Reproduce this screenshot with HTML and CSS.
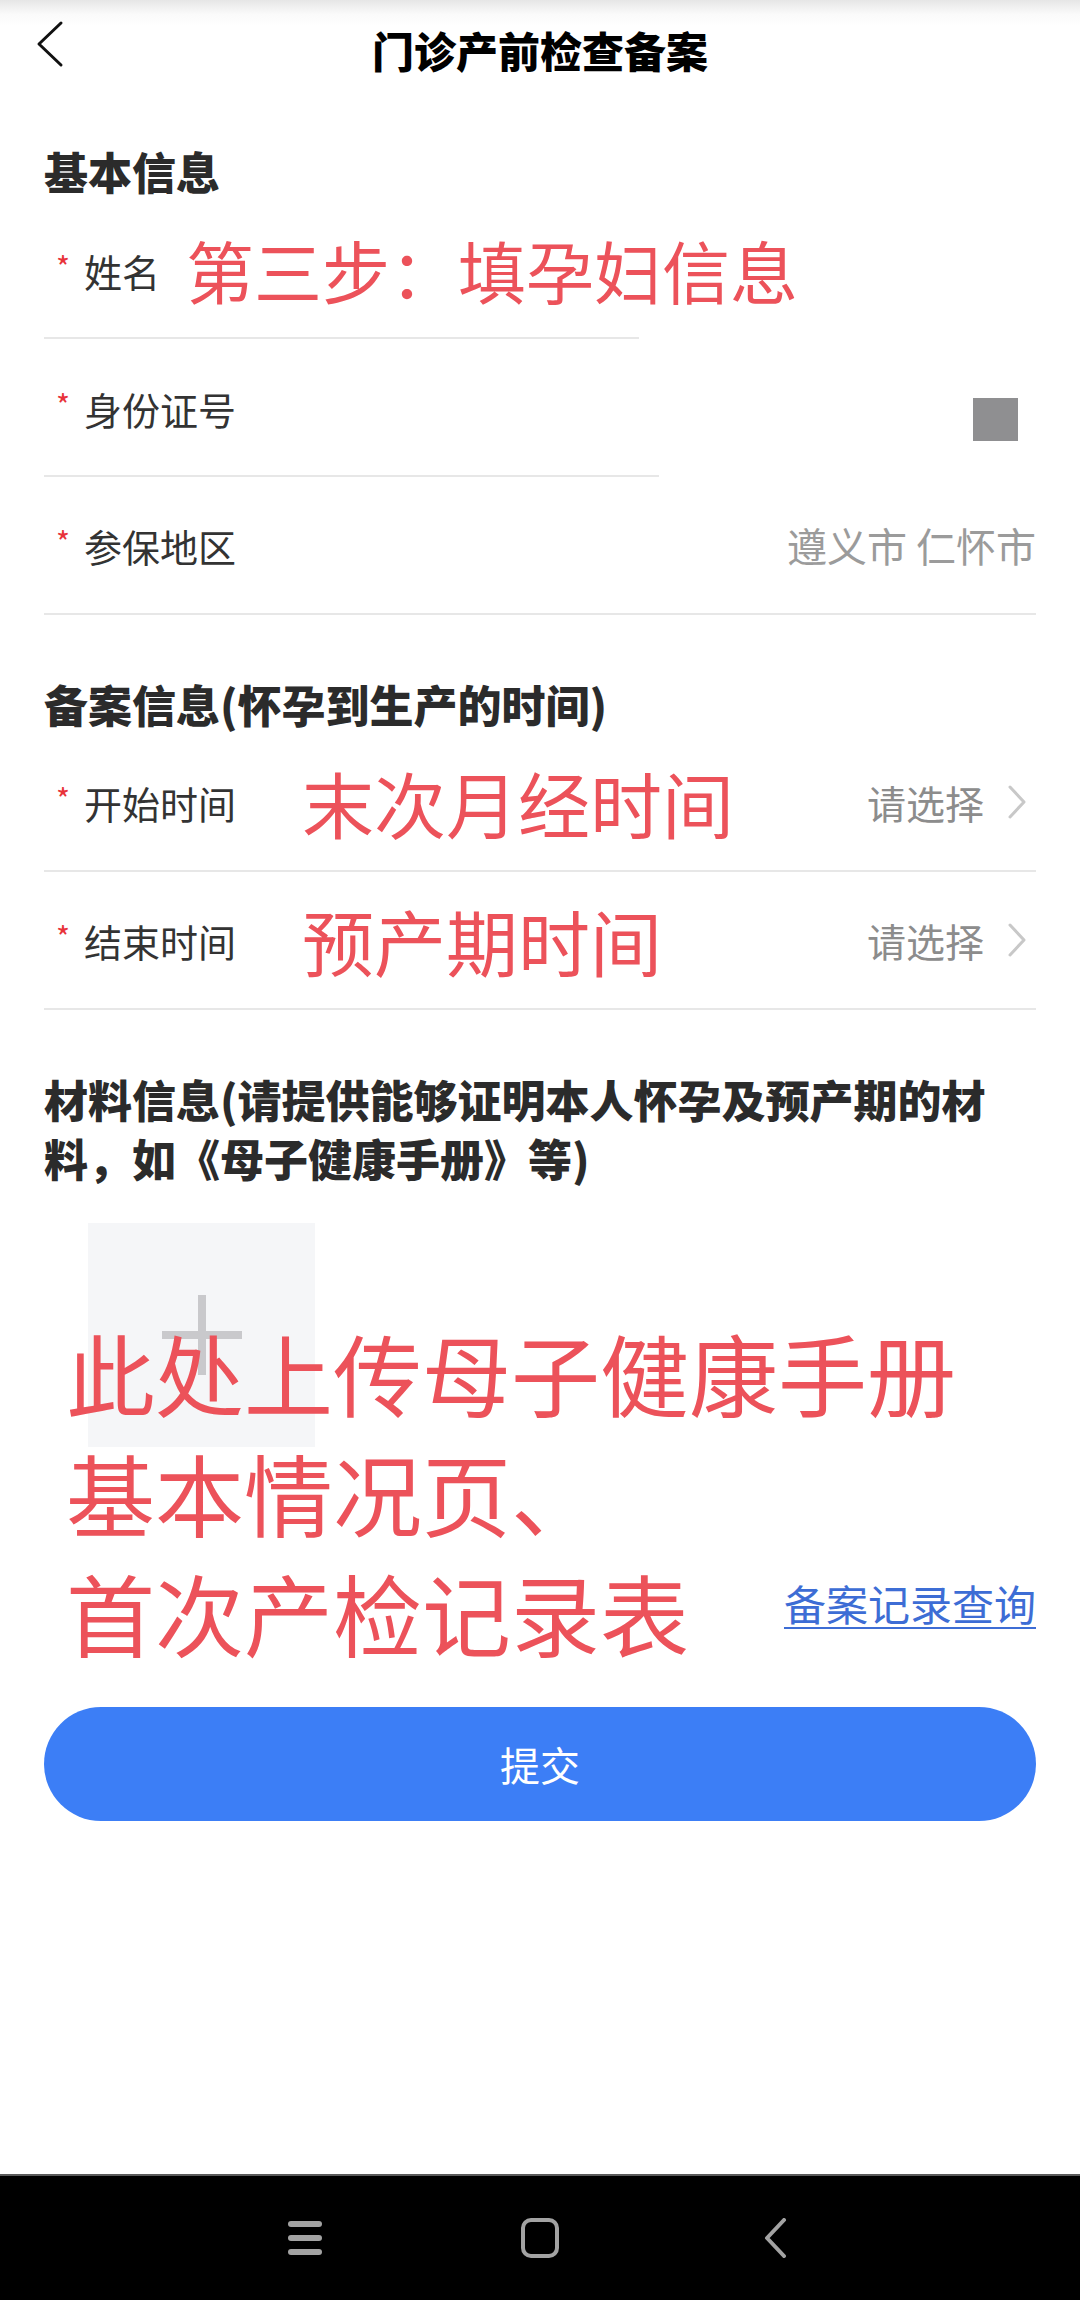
FILE: index.html
```html
<!DOCTYPE html>
<html lang="zh-CN">
<head>
  <meta charset="UTF-8" />
  <meta name="viewport" content="width=device-width, initial-scale=1" />
  <title>门诊产前检查备案</title>
  <link rel="stylesheet" href="styles.css">
</head>
<body>
  <header class="navbar">
    <button class="back-btn" aria-label="返回">
      <svg width="28" height="48" viewBox="0 0 28 48"><path d="M25 3 L3 24 L25 45" fill="none" stroke="#111" stroke-width="3" stroke-linecap="round" stroke-linejoin="round"/></svg>
    </button>
    <h1>门诊产前检查备案</h1>
    <span></span>
  </header>

  <main class="form">
    <h2 class="section-title first">基本信息</h2>
    <div class="row cut-short">
      <span class="label"><i class="req">*</i>姓名</span>
      <span class="note note-name">第三步：填孕妇信息</span>
    </div>
    <div class="row cut-long">
      <span class="label"><i class="req">*</i>身份证号</span>
      <span class="id-mask"></span>
    </div>
    <div class="row">
      <span class="label"><i class="req">*</i>参保地区</span>
      <span class="value">遵义市 仁怀市</span>
    </div>

    <h2 class="section-title">备案信息(怀孕到生产的时间)</h2>
    <div class="row">
      <span class="label"><i class="req">*</i>开始时间</span>
      <span class="note note-date">末次月经时间</span>
      <span class="picker">请选择
        <svg width="22" height="36" viewBox="0 0 22 36"><path d="M4 3 L18 18 L4 33" fill="none" stroke="#c8c8c8" stroke-width="3" stroke-linecap="round" stroke-linejoin="round"/></svg>
      </span>
    </div>
    <div class="row">
      <span class="label"><i class="req">*</i>结束时间</span>
      <span class="note note-date">预产期时间</span>
      <span class="picker">请选择
        <svg width="22" height="36" viewBox="0 0 22 36"><path d="M4 3 L18 18 L4 33" fill="none" stroke="#c8c8c8" stroke-width="3" stroke-linecap="round" stroke-linejoin="round"/></svg>
      </span>
    </div>

    <h2 class="section-title">材料信息(请提供能够证明本人怀孕及预产期的材<br>料，如《母子健康手册》等)</h2>
    <div class="upload">
      <div class="upload-box"><span class="plus"></span></div>
      <!-- annotation laid over the upload area -->
      <p class="upload-note">此处上传母子健康手册<br>基本情况页、<br>首次产检记录表</p>
    </div>

    <div class="link-row">
      <a href="#" class="record-link">备案记录查询</a>
    </div>

    <button class="submit-btn">提交</button>
  </main>

  <footer class="sysbar">
    <span class="sys-icon">
      <svg width="34" height="34" viewBox="0 0 34 34"><rect x="0" y="0" width="34" height="6" rx="3" fill="#a3a3a3"/><rect x="0" y="14" width="34" height="6" rx="3" fill="#a3a3a3"/><rect x="0" y="28" width="34" height="6" rx="3" fill="#a3a3a3"/></svg>
    </span>
    <span class="sys-icon">
      <svg width="40" height="40" viewBox="0 0 40 40"><rect x="3" y="2" width="34" height="36" rx="8" fill="none" stroke="#a3a3a3" stroke-width="4"/></svg>
    </span>
    <span class="sys-icon">
      <svg width="24" height="40" viewBox="0 0 24 40"><path d="M21 2 L4 20 L21 38" fill="none" stroke="#a3a3a3" stroke-width="4" stroke-linecap="round" stroke-linejoin="round"/></svg>
    </span>
  </footer>
</body>
</html>
```

FILE: styles.css
```css
body {
  font-family: "Noto Sans CJK SC", "Noto Sans", sans-serif;
  margin: 0;
  padding: 0;
  min-height: 100vh;
  display: flex;
  flex-direction: column;
  background-color: #fff;
  color: #333;
}

/* Top bar */
.navbar {
  height: 100px;
  display: grid;
  grid-template-columns: 1fr auto 1fr;
  align-items: center;
  background: linear-gradient(#e6e6e6 0, #fafafa 14px, #fff 26px);
}
.back-btn {
  justify-self: start;
  align-self: start;
  margin: 20px 0 0 36px;
  padding: 0;
  border: none;
  background: transparent;
  line-height: 0;
}
.navbar h1 {
  margin: 0;
  font-size: 42px;
  font-weight: 900;
  color: #000;
  line-height: 60px;
}

/* Form */
.form {
  padding: 0 44px;
  display: flex;
  flex-direction: column;
}
.section-title {
  margin: 60px 0 0;
  font-size: 44px;
  font-weight: 900;
  line-height: 59px;
  color: #2b2b2b;
}
.section-title.first {
  margin-top: 42px;
}
.row {
  height: 138px;
  box-sizing: border-box;
  display: flex;
  align-items: center;
  border-bottom: 2px solid #e7e7e7;
}
.row.cut-short,
.row.cut-long {
  border-bottom: none;
  background: linear-gradient(#e7e7e7, #e7e7e7) left bottom / 60% 2px no-repeat;
}
.row.cut-long {
  background-size: 62% 2px;
}
.label {
  font-size: 38px;
  color: #333;
  white-space: nowrap;
}
.req {
  font-style: normal;
  color: #e8333a;
  font-size: 30px;
  vertical-align: 8px;
  margin: 0 14px 0 12px;
}
.note {
  color: #ec525a;
  line-height: 1;
  white-space: nowrap;
}
.note-name {
  font-size: 68px;
  margin-left: 26px;
}
.note-date {
  font-size: 72px;
  margin-left: 66px;
}
.id-mask {
  width: 45px;
  height: 43px;
  margin: 22px 18px 0 auto;
  background: #8f8f91;
}
.value {
  margin-left: auto;
  font-size: 40px;
  color: #9b9b9b;
}
.picker {
  margin-left: auto;
  display: flex;
  align-items: center;
  gap: 22px;
  font-size: 39px;
  color: #8c8c8c;
  padding-right: 8px;
}

/* Upload */
.upload {
  position: relative;
  margin-top: 35px;
}
.upload-box {
  width: 227px;
  height: 224px;
  margin-left: 44px;
  background: #f5f6f8;
  display: flex;
  align-items: center;
  justify-content: center;
}
.plus {
  position: relative;
  width: 80px;
  height: 80px;
}
.plus::before,
.plus::after {
  content: "";
  position: absolute;
  background: #c9c9cc;
}
.plus::before {
  left: 0;
  top: 36px;
  width: 80px;
  height: 8px;
}
.plus::after {
  left: 36px;
  top: 0;
  width: 8px;
  height: 80px;
}
.upload-note {
  position: absolute;
  left: 22px;
  top: 89px;
  margin: 0;
  font-size: 89px;
  line-height: 120px;
  color: #ec525a;
  white-space: nowrap;
}

.link-row {
  margin-top: 131px;
  text-align: right;
  line-height: 50px;
}
.record-link {
  font-size: 42px;
  color: #3d6dd5;
  text-decoration: underline;
  text-underline-offset: 6px;
  text-decoration-thickness: 2px;
}

.submit-btn {
  margin-top: 68px;
  height: 114px;
  border: none;
  border-radius: 57px;
  background: #3c7ef6;
  color: #fff;
  font-family: inherit;
  font-size: 40px;
}

/* System navigation bar */
.sysbar {
  margin-top: auto;
  height: 126px;
  box-sizing: border-box;
  border-top: 2px solid #5a5a5a;
  background: #000;
  display: flex;
  justify-content: center;
  align-items: center;
  gap: 175px;
}
.sys-icon {
  width: 60px;
  display: flex;
  justify-content: center;
}
```
